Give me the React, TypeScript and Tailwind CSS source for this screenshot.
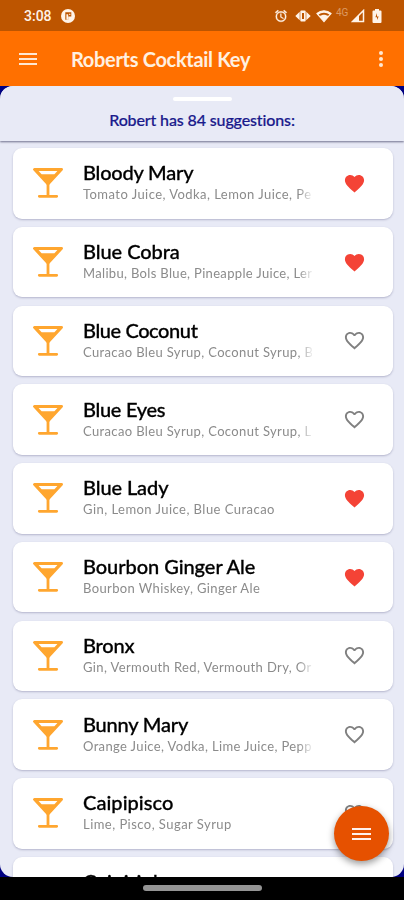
import React from 'react';

interface Cocktail {
  name: string;
  ingredients: string;
  liked: boolean;
  nameClass: string;
  textClass: string;
}

const COCKTAILS: Cocktail[] = [
  { name: 'Bloody Mary', ingredients: 'Tomato Juice, Vodka, Lemon Juice, Pe', liked: true, nameClass: 'tracking-[-0.2px]', textClass: 'tracking-[0.45px]' },
  { name: 'Blue Cobra', ingredients: 'Malibu, Bols Blue, Pineapple Juice, Ler', liked: true, nameClass: 'tracking-[-0.05px]', textClass: 'tracking-[0.33px]' },
  { name: 'Blue Coconut', ingredients: 'Curacao Bleu Syrup, Coconut Syrup, B', liked: false, nameClass: 'tracking-[-0.4px]', textClass: 'tracking-[0.36px]' },
  { name: 'Blue Eyes', ingredients: 'Curacao Bleu Syrup, Coconut Syrup, L', liked: false, nameClass: 'tracking-[-0.3px]', textClass: 'tracking-[0.36px]' },
  { name: 'Blue Lady', ingredients: 'Gin, Lemon Juice, Blue Curacao', liked: true, nameClass: 'tracking-[-0.1px]', textClass: 'tracking-[0.46px]' },
  { name: 'Bourbon Ginger Ale', ingredients: 'Bourbon Whiskey, Ginger Ale', liked: true, nameClass: 'tracking-[-0.05px]', textClass: 'tracking-[0.38px]' },
  { name: 'Bronx', ingredients: 'Gin, Vermouth Red, Vermouth Dry, Or', liked: false, nameClass: 'tracking-[-0.2px]', textClass: 'tracking-[0.38px]' },
  { name: 'Bunny Mary', ingredients: 'Orange Juice, Vodka, Lime Juice, Pepp', liked: false, nameClass: 'tracking-[-0.2px]', textClass: 'tracking-[0.36px]' },
  { name: 'Caipipisco', ingredients: 'Lime, Pisco, Sugar Syrup', liked: false, nameClass: 'tracking-[0.05px]', textClass: 'tracking-[0.46px]' },
  { name: 'Caipirinha', ingredients: '', liked: false, nameClass: 'tracking-[0.3px]', textClass: '' },
];

const HEART_FILLED = 'M12 21.35l-1.45-1.32C5.4 15.36 2 12.28 2 8.5 2 5.42 4.42 3 7.5 3c1.74 0 3.41.81 4.5 2.09C13.09 3.81 14.76 3 16.5 3 19.58 3 22 5.42 22 8.5c0 3.78-3.4 6.86-8.55 11.54L12 21.35z';
const HEART_OUTLINE = 'M16.5 3c-1.74 0-3.41.81-4.5 2.09C10.91 3.81 9.24 3 7.5 3 4.42 3 2 5.42 2 8.5c0 3.78 3.4 6.86 8.55 11.54L12 21.35l1.45-1.32C18.6 15.36 22 12.28 22 8.5 22 5.42 19.58 3 16.5 3zm-4.4 15.55l-.1.1-.1-.1C7.14 14.24 4 11.39 4 8.5 4 6.5 5.5 5 7.5 5c1.54 0 3.04.99 3.57 2.36h1.87C13.46 5.99 14.96 5 16.5 5c2 0 3.5 1.5 3.5 3.5 0 2.89-3.14 5.74-7.9 10.05z';

const Heart: React.FC<{ liked: boolean }> = ({ liked }) => (
  <svg viewBox="0 0 24 24" className={`size-[23px] ${liked ? 'text-[#f44336]' : 'text-[#808080]'}`} fill="currentColor">
    <path d={liked ? HEART_FILLED : HEART_OUTLINE} />
  </svg>
);

const Martini: React.FC = () => (
  <svg viewBox="0 0 32 32" className="size-8 text-[#ffa62f]" fill="none" stroke="currentColor" strokeWidth="2.8" strokeLinejoin="round" strokeLinecap="round">
    <path d="M2.4 2.4h27.2L16 17z" fill="currentColor" />
    <path d="M6.6 4h18.8l-3 3.3H9.6z" fill="#fff" stroke="none" />
    <path d="M16 17v12M7.3 29.3h17.4" />
  </svg>
);

const StatusBar: React.FC = () => (
  <div className="flex h-[31px] shrink-0 items-center justify-between bg-[#bd5500] pl-6 pr-[22px] text-[#fff3e8]">
    <div className="flex items-center gap-[9px]">
      <span className="w-7 whitespace-nowrap font-['Roboto'] text-[14px] font-medium leading-none">3:08</span>
      <svg viewBox="0 0 14 14" className="size-[14px]">
        <circle cx="7" cy="7" r="7" fill="#fff3e8" />
        <path d="M4.3 3.3h6v4.2H7.2v3.3H4.3z" fill="#bd5500" />
        <path d="M5.4 5.2h1.8v5.6H5.4zM8.2 4.8h1.2v1.2H8.2z" fill="#fff3e8" />
      </svg>
    </div>
    <div className="flex items-center">
      <svg viewBox="0 0 24 24" className="size-[14px]" fill="currentColor" stroke="currentColor" strokeWidth="0.6">
        <path d="M22 5.7l-4.6-3.9-1.3 1.5 4.6 3.9L22 5.7zM7.9 3.4L6.6 1.9 2 5.7l1.3 1.5 4.6-3.8zM12.5 8H11v6l4.7 2.9.8-1.2-4-2.4V8zM12 4a9 9 0 100 18 9 9 0 000-18zm0 16a7 7 0 110-14 7 7 0 010 14z" />
      </svg>
      <svg viewBox="0 0 16 14" className="ml-[7px] h-[14px] w-4" fill="currentColor">
        <path d="M4.7 2.7v8.6L.3 7zM11.3 2.7v8.6L15.7 7z" />
        <path fillRule="evenodd" d="M6.3 1.5h3.4a1 1 0 011 1v9a1 1 0 01-1 1H6.3a1 1 0 01-1-1v-9a1 1 0 011-1zM7 4v6h2V4z" />
      </svg>
      <svg viewBox="0 0 16 14" className="ml-[5px] h-[14px] w-4">
        <path d="M1 4.5C5 .8 11 .8 15 4.5L8 12.6z" fill="none" stroke="currentColor" strokeWidth="1.2" />
        <path d="M3.6 7.2c2.7-2 6.100-2 8.800 0L8 12.600z" fill="currentColor" />
        <path d="M1 4.500C5 .8 11 .8 15 4.500l-1.200 1.300c-3.500-2.700-8.100-2.700-11.600 0z" fill="currentColor" />
      </svg>
      <span className="ml-[4px] w-[15px] -translate-y-[3px] whitespace-nowrap font-['Roboto'] text-[10px] leading-none text-[#dc9a63]">4G</span>
      <svg viewBox="0 0 14 14" className="size-[14px]">
        <path d="M1.500 12.500h11v-11z" fill="none" stroke="currentColor" strokeWidth="1.5" />
        <path d="M1 13l7-7v7z" fill="currentColor" />
      </svg>
      <svg viewBox="0 0 10 14" className="ml-[7px] h-[14px] w-[10px]">
        <path d="M3 0h4v1.500h1.500a1 1 0 011 1V13a1 1 0 01-1 1h-7a1 1 0 01-1-1V2.500a1 1 0 011-1H3z" fill="currentColor" />
        <path d="M5 4v3.500h1.700L5 11V8.300H3.400z" fill="#bd5500" />
      </svg>
    </div>
  </div>
);

const CocktailCard: React.FC<{ item: Cocktail }> = ({ item }) => (
  <div className="flex h-[70.5px] shrink-0 items-center rounded-[9px] bg-white pl-[19px] pr-[27px] shadow-[0_1px_2px_rgba(60,60,110,0.3)]">
    <Martini />
    <div className="ml-[19.5px] h-[46px] w-[229px] whitespace-nowrap [mask-image:linear-gradient(to_right,#000_94%,transparent_101%)]">
      <div className={`text-[20px] font-medium leading-[24px] text-black [-webkit-text-stroke:0.3px_currentColor] ${item.nameClass}`}>{item.name}</div>
      <div className={`pt-px text-[13px] leading-[19px] text-[#8b8b8b] ${item.textClass}`}>{item.ingredients}</div>
    </div>
    <div className="ml-auto">
      <Heart liked={item.liked} />
    </div>
  </div>
);

export default function App() {
  return (
    <div className="relative flex h-[900px] w-[404px] flex-col overflow-hidden bg-[#000080] font-['Lato',sans-serif]">
      <StatusBar />

      {/* App bar */}
      <header className="flex h-[55px] shrink-0 items-center bg-[#ff7000] pl-[19px] pr-[21px] text-[#ffe8d3]">
        <div className="flex w-[18px] flex-col gap-[3px]">
          <span className="h-[2px] bg-current" />
          <span className="h-[2px] bg-current" />
          <span className="h-[2px] bg-current" />
        </div>
        <h1 className="ml-[34px] whitespace-nowrap text-[20px] font-bold leading-none tracking-[-0.32px] text-[#fff0e0]">Roberts Cocktail Key</h1>
        <div className="ml-auto flex flex-col gap-[2px]">
          <span className="size-1 rounded-full bg-current" />
          <span className="size-1 rounded-full bg-current" />
          <span className="size-1 rounded-full bg-current" />
        </div>
      </header>

      {/* Suggestions */}
      <main className="flex h-[791px] shrink-0 flex-col overflow-hidden rounded-[13px] bg-[#e8eaf6]">
        <div className="z-10 flex h-[55px] shrink-0 flex-col items-center bg-[#e8eaf6] pt-[11px] shadow-[0_1px_2px_rgba(30,30,70,0.6)]">
          <span className="h-[4px] w-[59px] rounded-full bg-white" />
          <p className="mt-[9px] whitespace-nowrap text-[16px] font-medium leading-5 tracking-[-0.13px] text-[#1a1a8c] [-webkit-text-stroke:0.2px_currentColor]">Robert has 84 suggestions:</p>
        </div>
        <div className="flex flex-col gap-[8.25px] pl-[12.5px] pr-[11.5px] pt-[7px]">
          {COCKTAILS.map(item => (
            <CocktailCard key={item.name} item={item} />
          ))}
        </div>
      </main>

      <footer className="flex h-[23px] shrink-0 justify-center bg-black pt-2">
        <span className="h-[6px] w-[119px] rounded-full bg-[#949494]" />
      </footer>

      <button className="absolute bottom-[39px] right-[15px] z-20 flex size-[55px] flex-col items-center justify-center gap-[3px] rounded-full bg-[#e65100] shadow-[0_3px_7px_rgba(0,0,0,0.4)]">
        <span className="h-[2px] w-[19px] bg-[#fff0ec]" />
        <span className="h-[2px] w-[19px] bg-[#fff0ec]" />
        <span className="h-[2px] w-[19px] bg-[#fff0ec]" />
      </button>
    </div>
  );
}
